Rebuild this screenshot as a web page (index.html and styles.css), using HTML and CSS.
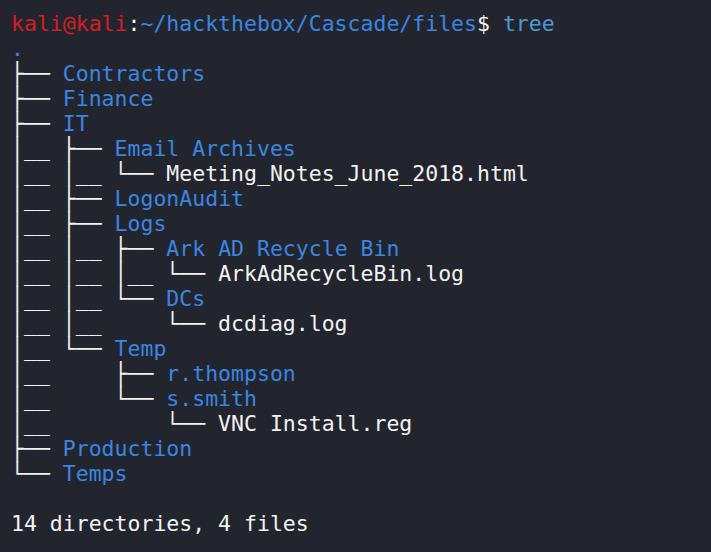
FILE: index.html
```html
<!DOCTYPE html>
<html>
<head>
<meta charset="utf-8">
<link rel="stylesheet" href="styles.css">
</head>
<body>
<pre class="term"><span class="r">kali@kali</span>:<span class="b">~/hackthebox/Cascade/files</span>$ <span class="c">tree</span>
<span class="b">.</span>
├── <span class="b">Contractors</span>
├── <span class="b">Finance</span>
├── <span class="b">IT</span>
│<span class="u">__</span> ├── <span class="b">Email Archives</span>
│<span class="u">__</span> │<span class="u">__</span> └── Meeting_Notes_June_2018.html
│<span class="u">__</span> ├── <span class="b">LogonAudit</span>
│<span class="u">__</span> ├── <span class="b">Logs</span>
│<span class="u">__</span> │<span class="u">__</span> ├── <span class="b">Ark AD Recycle Bin</span>
│<span class="u">__</span> │<span class="u">__</span> │<span class="u">__</span> └── ArkAdRecycleBin.log
│<span class="u">__</span> │<span class="u">__</span> └── <span class="b">DCs</span>
│<span class="u">__</span> │<span class="u">__</span>     └── dcdiag.log
│<span class="u">__</span> └── <span class="b">Temp</span>
│<span class="u">__</span>     ├── <span class="b">r.thompson</span>
│<span class="u">__</span>     └── <span class="b">s.smith</span>
│<span class="u">__</span>         └── VNC Install.reg
├── <span class="b">Production</span>
└── <span class="b">Temps</span>

14 directories, 4 files</pre>
</body>
</html>
```
FILE: styles.css
```css
html, body {
  margin: 0;
  padding: 0;
  background: #23252e;
  width: 711px;
  height: 552px;
  overflow: hidden;
}
.term {
  margin: 0;
  padding: 11px 0 0 11px;
  font-family: "DejaVu Sans Mono", monospace;
  font-size: 21.5px;
  line-height: 25px;
  color: #f2f2f2;
  white-space: pre;
}
.r { color: #d41d24; }
.b { color: #3a86e0; }
.c { color: #4a9bd2; }
.u { color: #f2f2f2; }
```
